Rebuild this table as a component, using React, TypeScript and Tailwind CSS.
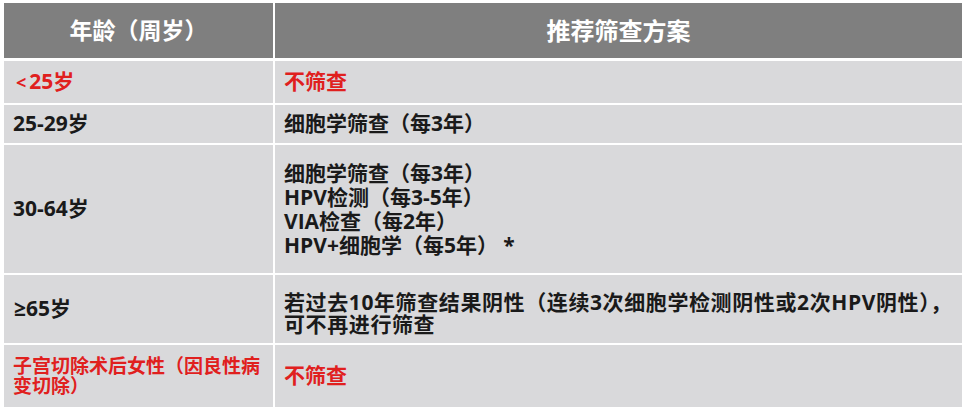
import React from "react";

const red = "text-[#e0201e]";

export default function App() {
  return (
    <div
      className="w-[965px] h-[408px] bg-white pl-[4px] pt-[3px] overflow-hidden"
      style={{ fontFamily: '"Open Sans","Noto Sans CJK SC",sans-serif' }}
    >
      <div className="w-[958px] grid grid-cols-[269px_687px] gap-x-[2px] font-bold text-[#1a1a1a]">
        {/* header */}
        <div className="h-[55px] bg-[#7f7f7f] flex items-center justify-center text-white text-[23px]">
          年龄（周岁）
        </div>
        <div className="h-[55px] bg-[#7f7f7f] flex items-center justify-center text-white text-[24px]">
          推荐筛查方案
        </div>

        {/* row 1 */}
        <div className={`mt-[3px] h-[42px] bg-[#d9d9db] flex items-center pl-[12px] text-[21px] ${red}`}>
          <span className="text-[18px] mr-[3px]">&lt;</span>25岁
        </div>
        <div className={`mt-[3px] h-[42px] bg-[#d9d9db] flex items-center pl-[9px] text-[21px] ${red}`}>
          不筛查
        </div>

        {/* row 2 */}
        <div className="mt-[2px] h-[38px] bg-[#d9d9db] flex items-center pl-[9px] text-[21px]">
          25-29岁
        </div>
        <div className="mt-[2px] h-[38px] bg-[#d9d9db] flex items-center pl-[9px] text-[21px]">
          细胞学筛查（每3年）
        </div>

        {/* row 3 */}
        <div className="mt-[2px] h-[128px] bg-[#d9d9db] flex items-center pl-[9px] text-[21px]">
          30-64岁
        </div>
        <div className="mt-[2px] h-[128px] bg-[#d9d9db] flex flex-col justify-center pl-[9px] text-[21px] leading-[24px]">
          <div>细胞学筛查（每3年）</div>
          <div>HPV检测（每3-5年）</div>
          <div>VIA检查（每2年）</div>
          <div>HPV+细胞学（每5年）&nbsp;*</div>
        </div>

        {/* row 4 */}
        <div className="mt-[2px] h-[68px] bg-[#d9d9db] flex items-center pl-[10px] text-[21px]">
          ≥65岁
        </div>
        <div className="mt-[2px] h-[68px] bg-[#d9d9db] flex flex-col pt-[16px] pl-[9px] text-[21px] leading-[22px] tracking-[0.6px]">
          <div className="whitespace-nowrap">若过去10年筛查结果阴性（连续3次细胞学检测阴性或2次HPV阴性），</div>
          <div>可不再进行筛查</div>
        </div>

        {/* row 5 */}
        <div className={`mt-[2px] h-[62px] bg-[#d9d9db] flex flex-col justify-center pl-[9px] text-[19px] leading-[20px] ${red}`}>
          <div className="whitespace-nowrap">子宫切除术后女性（因良性病</div>
          <div>变切除）</div>
        </div>
        <div className={`mt-[2px] h-[62px] bg-[#d9d9db] flex items-center pl-[9px] text-[21px] ${red}`}>
          不筛查
        </div>
      </div>
    </div>
  );
}
